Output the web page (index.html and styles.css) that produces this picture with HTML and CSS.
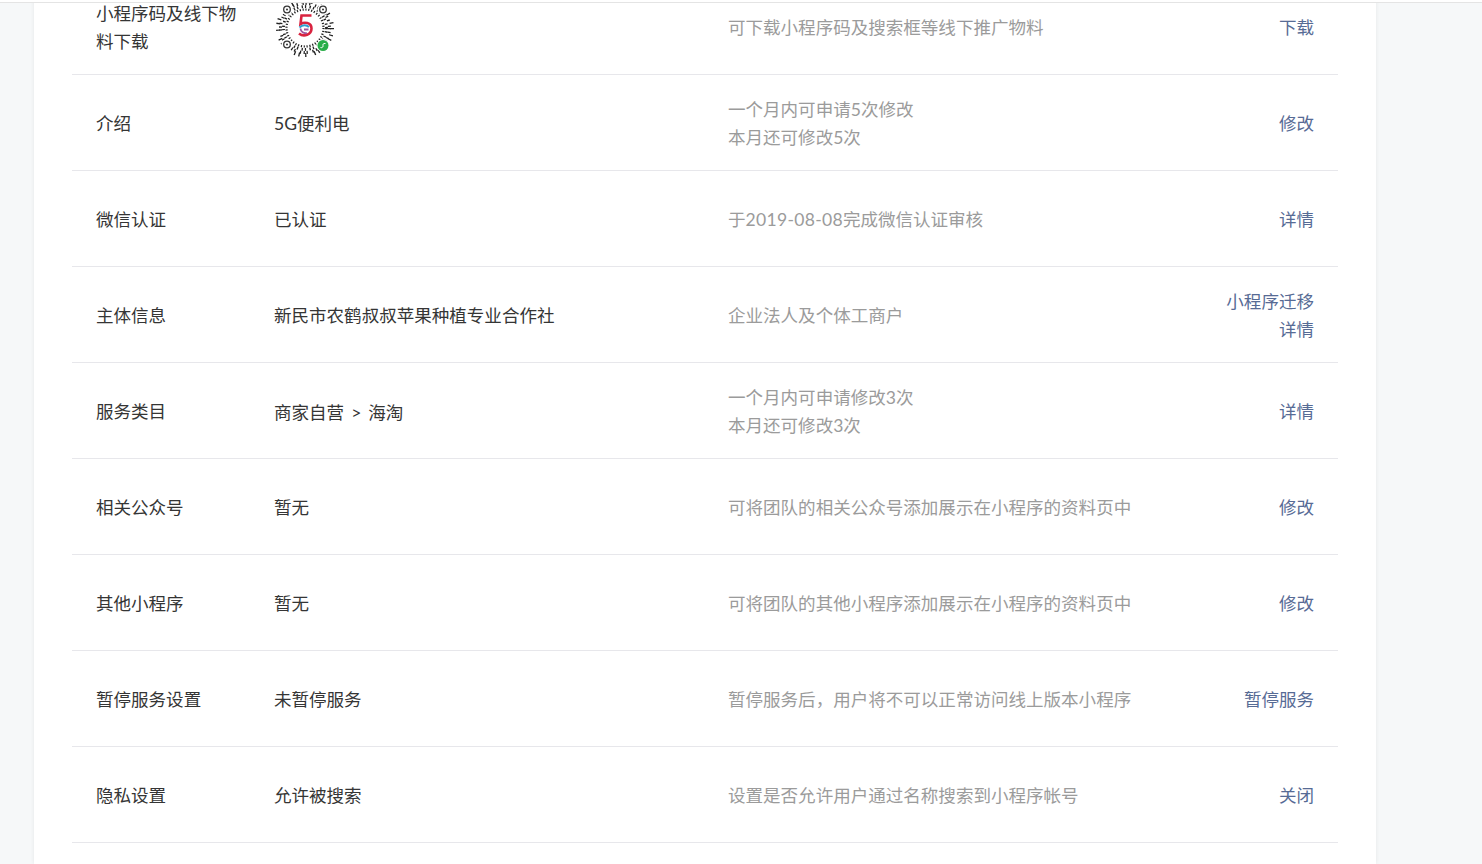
FILE: index.html
```html
<!DOCTYPE html>
<html lang="zh-CN">
<head>
<meta charset="utf-8">
<title>小程序设置</title>
<link rel="stylesheet" href="styles.css">
</head>
<body>
<div class="topline"></div>
<main class="card">
  <div class="table">
    <div class="row">
      <div class="label">小程序码及线下物料下载</div>
      <div class="value">
        <svg class="qr" viewBox="0 0 64 64" width="64" height="64" aria-hidden="true">
          <g fill="none" stroke="#222" stroke-linecap="butt">
            <circle cx="32" cy="32" r="18.500" stroke-width="2.200" stroke-dasharray="1.200 1.700"/>
            <circle cx="32" cy="32" r="21.500" stroke-width="2.800" stroke-dasharray="1.300 2.100 1.300 3.400"/>
            <circle cx="32" cy="32" r="24.500" stroke-width="3" stroke-dasharray="1.300 2.500 1.300 4.600 1.300 1.800"/>
            <circle cx="32" cy="32" r="27" stroke-width="4" stroke-dasharray="1.300 5.500 1.300 3 1.300 8"/>
          </g>
          <g fill="#fff" stroke="#333" stroke-width="1.300">
            <circle cx="14" cy="13.500" r="5.500" stroke="none"/>
            <circle cx="50" cy="13.500" r="5.500" stroke="none"/>
            <circle cx="14" cy="48.500" r="5.500" stroke="none"/>
            <circle cx="14" cy="13.500" r="3.300"/>
            <circle cx="50" cy="13.500" r="3.300"/>
            <circle cx="14" cy="48.500" r="3.300"/>
          </g>
          <g fill="#333">
            <circle cx="14" cy="13.500" r="1"/>
            <circle cx="50" cy="13.500" r="1"/>
            <circle cx="14" cy="48.500" r="1"/>
          </g>
          <circle cx="32" cy="30" r="14.500" fill="#fff"/>
          <path d="M38.500 19.500H28.500L27.500 28C31 26 38.500 26 38.500 32.500C38.500 38.500 31 41.500 26 37.500" fill="none" stroke="#d9233f" stroke-width="2.600"/>
          <path d="M26.500 31.500C29.500 28.500 33.500 28.500 36 31" fill="none" stroke="#2f9fd0" stroke-width="2"/>
          <path d="M27.500 32.500A5 5 0 0 0 34 37M31 33.500H35.500" fill="none" stroke="#a0579c" stroke-width="1.800"/>
          <circle cx="50" cy="49.500" r="6.500" fill="#fff"/>
          <circle cx="50" cy="49.500" r="5.500" fill="#2aae4a"/>
          <path d="M47.500 51.500C49.500 52.500 50.500 50 50 49.500S50 47 52.500 47.500" fill="none" stroke="#fff" stroke-width="1"/>
        </svg>
      </div>
      <div class="note">可下载小程序码及搜索框等线下推广物料</div>
      <div class="action"><a>下载</a></div>
    </div>
    <div class="row">
      <div class="label">介绍</div>
      <div class="value">5G便利电</div>
      <div class="note">一个月内可申请5次修改<br>本月还可修改5次</div>
      <div class="action"><a>修改</a></div>
    </div>
    <div class="row">
      <div class="label">微信认证</div>
      <div class="value">已认证</div>
      <div class="note">于<span class="date">2019-08-08</span>完成微信认证审核</div>
      <div class="action"><a>详情</a></div>
    </div>
    <div class="row">
      <div class="label">主体信息</div>
      <div class="value">新民市农鹤叔叔苹果种植专业合作社</div>
      <div class="note">企业法人及个体工商户</div>
      <div class="action"><a>小程序迁移</a><a>详情</a></div>
    </div>
    <div class="row">
      <div class="label">服务类目</div>
      <div class="value value-low">商家自营<span class="sep">&gt;</span>海淘</div>
      <div class="note">一个月内可申请修改3次<br>本月还可修改3次</div>
      <div class="action"><a>详情</a></div>
    </div>
    <div class="row">
      <div class="label">相关公众号</div>
      <div class="value">暂无</div>
      <div class="note">可将团队的相关公众号添加展示在小程序的资料页中</div>
      <div class="action"><a>修改</a></div>
    </div>
    <div class="row">
      <div class="label">其他小程序</div>
      <div class="value">暂无</div>
      <div class="note">可将团队的其他小程序添加展示在小程序的资料页中</div>
      <div class="action"><a>修改</a></div>
    </div>
    <div class="row">
      <div class="label">暂停服务设置</div>
      <div class="value">未暂停服务</div>
      <div class="note">暂停服务后，用户将不可以正常访问线上版本小程序</div>
      <div class="action"><a>暂停服务</a></div>
    </div>
    <div class="row">
      <div class="label">隐私设置</div>
      <div class="value">允许被搜索</div>
      <div class="note">设置是否允许用户通过名称搜索到小程序帐号</div>
      <div class="action"><a>关闭</a></div>
    </div>
  </div>
</main>
</body>
</html>
```
FILE: styles.css
```css
* { box-sizing: border-box; }
html, body { margin: 0; height: 100%; overflow: hidden; }
body {
  background: #f6f8f9;
  font-family: "Lato", "Noto Sans CJK SC", sans-serif;
  font-size: 17.55px;
  line-height: 28px;
  color: #353535;
  position: relative;
}
.topline {
  position: absolute;
  top: 0; left: 0; right: 0;
  height: 3px;
  background: #fff;
  border-bottom: 1px solid #e4e4e4;
  z-index: 2;
}
.card {
  display: flow-root;
  width: 1342px;
  margin-left: 34px;
  height: 100%;
  background: #fff;
  padding: 0 38px;
  box-shadow: 0 0 4px rgba(0,0,0,.07);
}
.table { margin-top: -21px; }
.row {
  display: grid;
  grid-template-columns: 178px 454px 1fr 150px;
  align-items: center;
  height: 96px;
  padding: 2px 24px 0 24px;
  border-bottom: 1px solid #e7e7eb;
}
.label { padding-right: 28px; }
.value-low { padding-top: 2px; }
.note { color: #9b9b9b; white-space: nowrap; }
.date { letter-spacing: .3px; }
.action { text-align: right; color: #576b95; }
.action a { display: block; }
.sep { margin: 0 7px; }
.qr { display: block; margin: 1px 0 0 -1px; }
```
